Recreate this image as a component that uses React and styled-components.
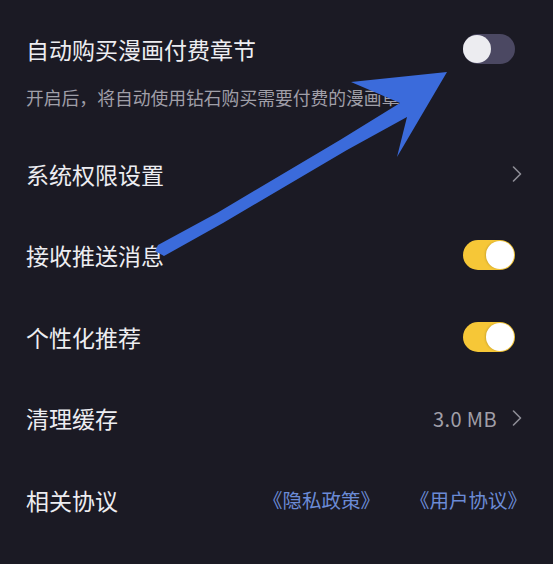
import React from 'react';
import styled, { createGlobalStyle } from 'styled-components';

const GlobalStyle = createGlobalStyle`
  html, body {
    margin: 0;
    padding: 0;
    background: #1b1a24;
  }
  body {
    font-family: "Noto Sans CJK SC", "Noto Sans", sans-serif;
    -webkit-font-smoothing: antialiased;
  }
`;

const Page = styled.div`
  position: relative;
  width: 553px;
  min-height: 564px;
  background: #1b1a24;
  overflow: hidden;
`;

const AutoBuy = styled.section`
  padding: 34px 31px 24px 26px;
`;

const Header = styled.div`
  display: flex;
  align-items: center;
  justify-content: space-between;
  height: 30px;
`;

const Title = styled.span`
  font-size: 23px;
  line-height: 30px;
  color: #ededf1;
  white-space: nowrap;
`;

const Hint = styled.p`
  margin: 21px 0 0;
  font-size: 17.8px;
  line-height: 24px;
  color: #a09fa8;
  white-space: nowrap;
`;

const Row = styled.div`
  display: flex;
  align-items: center;
  justify-content: space-between;
  height: 81.5px;
  padding: 0 31px 0 26px;
`;

const Trailing = styled.div`
  display: flex;
  align-items: center;
  gap: ${props => props.gap || 15}px;
  margin-right: ${props => props.offset || 0}px;
`;

const Value = styled.span`
  font-size: 20px;
  letter-spacing: 0.4px;
  color: #a09fa8;
`;

const Link = styled.span`
  font-size: 19.5px;
  color: #6b8bd6;
  white-space: nowrap;
`;

const Track = styled.div`
  position: relative;
  width: 52px;
  height: 30px;
  margin-right: 7px;
  border-radius: 15px;
  background: ${props => props.on ? '#f6c737' : '#4b4862'};
`;

const Knob = styled.div`
  position: absolute;
  top: 1px;
  left: ${props => props.on ? '23px' : '0'};
  width: 28px;
  height: 28px;
  border-radius: 50%;
  background: ${props => props.on ? '#ffffff' : '#ececf0'};
  box-shadow: ${props => props.on ? '-1px 0 2px rgba(0,0,0,0.15)' : 'none'};
`;

const Overlay = styled.svg`
  position: absolute;
  top: 0;
  left: 0;
  pointer-events: none;
`;

const Toggle = ({ on }) => (
  <Track on={on}>
    <Knob on={on} />
  </Track>
);

const Chevron = () => (
  <svg width="10" height="16" viewBox="0 0 10 16">
    <polyline points="1.5,1 8.5,8 1.5,15" fill="none" stroke="#8e8d96" strokeWidth="1.6" strokeLinecap="round" strokeLinejoin="round" />
  </svg>
);

// the blue annotation arrow drawn over the screenshot
const Arrow = () => (
  <Overlay width="553" height="564" viewBox="0 0 553 564">
    <polygon
      fill="#3b6bdb"
      points="447,72 351,82 400,103 340,140 217,213 158,245 155,251 164,256 223,223 347,150 407,117 397,157"
    />
  </Overlay>
);

export default function App() {
  return (
    <>
      <GlobalStyle />
      <Page>
        <AutoBuy>
          <Header>
            <Title>自动购买漫画付费章节</Title>
            <Toggle on={false} />
          </Header>
          <Hint>开启后，将自动使用钻石购买需要付费的漫画章节</Hint>
        </AutoBuy>

        <Row>
          <Title>系统权限设置</Title>
          <Chevron />
        </Row>

        <Row>
          <Title>接收推送消息</Title>
          <Toggle on />
        </Row>

        <Row>
          <Title>个性化推荐</Title>
          <Toggle on />
        </Row>

        <Row>
          <Title>清理缓存</Title>
          <Trailing>
            <Value>3.0 MB</Value>
            <Chevron />
          </Trailing>
        </Row>

        <Row>
          <Title>相关协议</Title>
          <Trailing gap={30} offset={-5}>
            <Link>《隐私政策》</Link>
            <Link>《用户协议》</Link>
          </Trailing>
        </Row>

        <Arrow />
      </Page>
    </>
  );
}
